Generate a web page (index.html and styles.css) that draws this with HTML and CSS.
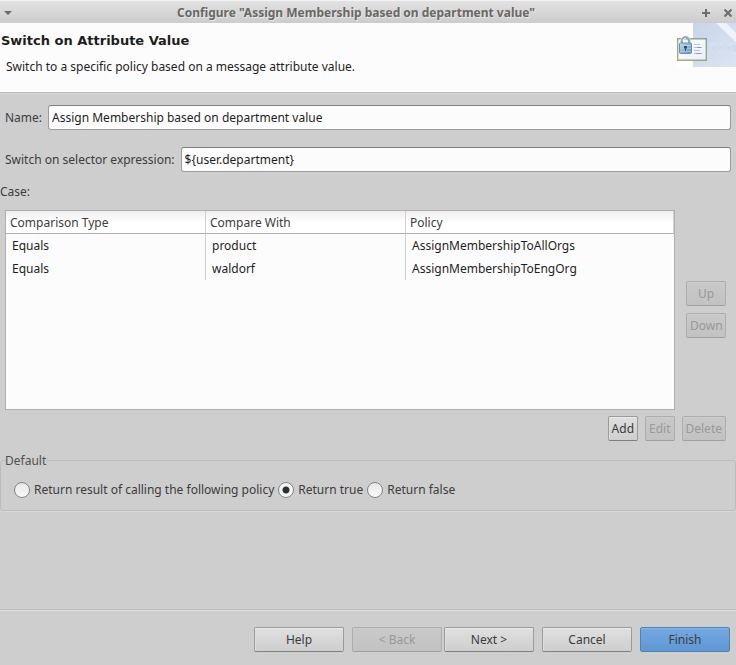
FILE: index.html
```html
<!DOCTYPE html>
<html lang="en">
<head>
<meta charset="utf-8">
<title>Configure "Assign Membership based on department value"</title>
<link rel="stylesheet" href="styles.css">
</head>
<body>
<div class="titlebar">
  <button class="win-btn" type="button" aria-label="Window menu"><svg width="8" height="4" viewBox="0 0 8 4"><path d="M0 0h8L4 4z" fill="#686868"/></svg></button>
  <div class="titlebar-text">Configure "Assign Membership based on department value"</div>
  <div class="win-actions">
    <button class="win-btn" type="button" aria-label="Maximize"><svg width="8" height="8" viewBox="0 0 8 8"><path d="M4 0v8M0 4h8" stroke="#6c6c6c" stroke-width="2"/></svg></button>
    <button class="win-btn" type="button" aria-label="Close"><svg width="8" height="8" viewBox="0 0 8 8"><path d="M.5.5l7 7M7.5.5l-7 7" stroke="#6c6c6c" stroke-width="2"/></svg></button>
  </div>
</div>
<header class="banner">
  <div class="banner-text">
    <h1>Switch on Attribute Value</h1>
    <p>Switch to a specific policy based on a message attribute value.</p>
  </div>
  <svg class="banner-art" width="59" height="44" viewBox="0 0 59 44" aria-hidden="true">
    <defs>
      <linearGradient id="sky" x1="0" y1="0" x2="1" y2="1"><stop offset="0" stop-color="#c8d5e8"/><stop offset="1" stop-color="#dbe4f3"/></linearGradient>
      <linearGradient id="card" x1="0" y1="0" x2="1" y2="1"><stop offset="0" stop-color="#ffffff"/><stop offset="1" stop-color="#e9effa"/></linearGradient>
      <linearGradient id="frame" x1="0" y1="1" x2="1" y2="0"><stop offset="0" stop-color="#b3a873"/><stop offset="1" stop-color="#86a39b"/></linearGradient>
      <linearGradient id="lock" x1="0" y1="0" x2="1" y2="1"><stop offset="0" stop-color="#c3dcee"/><stop offset="1" stop-color="#5f8fb9"/></linearGradient>
    </defs>
    <path d="M0 16h16v28H0z" fill="#fff"/>
    <path d="M16 0h43v44H16z" fill="url(#sky)"/>
    <path d="M39 0h10l10 10v9z" fill="#eef3fb"/>
    <path d="M31 21h28v8H31z" fill="#cfdbec"/>
    <g fill="none" stroke="#d9e3f1"><circle cx="36" cy="25" r="3"/><circle cx="44" cy="25" r="3"/><circle cx="52" cy="25" r="3"/><path d="M31 21h28M31 29h28"/></g>
    <path d="M.7 15.700h28.600v21.600H.7z" fill="url(#card)" stroke="url(#frame)" stroke-width="1.400"/>
    <path d="M17 21.500h6M17 24.500h8M17 27.500h6M17 30.500h8" stroke="#b3bfdd" fill="none"/>
    <path d="M20 24.500h4M19 30.500h5" stroke="#8b98c4" fill="none"/>
    <path d="M3.500 20v-2a5 5 0 0 1 10 0v2" fill="none" stroke="#e2e4a4" stroke-width="1"/>
    <path d="M5 21v-3a3.500 3.700 0 0 1 7 0v3" fill="none" stroke="#87abc2" stroke-width="2"/>
    <path d="M6 17.500a2.500 2.500 0 0 1 3-2" fill="none" stroke="#e4f1f9"/>
    <rect x="2.500" y="20" width="12" height="10.500" rx="1" fill="url(#lock)" stroke="#6790b4"/>
    <path d="M3 22.500h11M3 25.500h11M3 28.500h11" stroke="#b4d0e4" opacity=".7"/>
    <path d="M7 23h3v2.500H9V28H8v-2.500H7z" fill="#35506e"/>
  </svg>
</header>
<form class="page" onsubmit="return false">
  <main class="content">
    <div class="field"><label for="name">Name:</label><input id="name" type="text" value="Assign Membership based on department value"></div>
    <div class="field"><label for="expr">Switch on selector expression:</label><input id="expr" type="text" value="${user.department}"></div>
    <div class="case-label" id="case-label">Case:</div>
    <div class="case">
      <div class="table-box">
        <table aria-labelledby="case-label">
          <thead><tr><th>Comparison Type</th><th>Compare With</th><th class="wide">Policy</th></tr></thead>
          <tbody>
            <tr><td>Equals</td><td>product</td><td>AssignMembershipToAllOrgs</td></tr>
            <tr><td>Equals</td><td>waldorf</td><td>AssignMembershipToEngOrg</td></tr>
          </tbody>
        </table>
      </div>
      <div class="order"><button class="btn small" type="button" disabled>Up</button><button class="btn small" type="button" disabled>Down</button></div>
    </div>
    <div class="edit-actions">
      <button class="btn small" type="button">Add</button><button class="btn small" type="button" disabled>Edit</button><button class="btn small" type="button" disabled>Delete</button>
    </div>
    <fieldset>
      <legend>Default</legend>
      <div class="choices">
        <label><input type="radio" name="default">Return result of calling the following policy</label>
        <label><input type="radio" name="default" checked>Return true</label>
        <label><input type="radio" name="default">Return false</label>
      </div>
    </fieldset>
  </main>
  <footer class="footer">
    <button class="btn" type="button">Help</button>
    <div class="pair"><button class="btn" type="button" disabled>&lt; Back</button><button class="btn" type="button">Next &gt;</button></div>
    <button class="btn" type="button">Cancel</button>
    <button class="btn primary" type="submit">Finish</button>
  </footer>
</form>
</body>
</html>
```
FILE: styles.css
```css
* { box-sizing: border-box; }

body {
  margin: 0;
  min-height: 100vh;
  display: flex;
  flex-direction: column;
  background: #cecece;
  color: #3c3c3c;
  font: 12px/17px "Noto Sans", sans-serif;
}

button, input { font: inherit; color: inherit; }

.titlebar {
  display: grid;
  grid-template-columns: 24px 1fr 48px;
  align-items: center;
  height: 23px;
  padding: 1px 4px 0;
  border-top: 1px solid #f4f4f4;
  background: linear-gradient(#e2e2e2, #cccccc);
}

.titlebar-text {
  color: #696865;
  font-weight: 700;
  text-align: center;
  text-shadow: 1px 1px 0 #e8e8e8;
}

.win-btn {
  display: flex;
  align-items: center;
  width: 8px;
  height: 16px;
  padding: 0;
  border: 0;
  background: none;
}

.win-actions { display: flex; justify-content: flex-end; gap: 14px; }

.banner {
  display: flex;
  justify-content: space-between;
  height: 70px;
  background: #fcfcfc;
  border-bottom: 1px solid #b7b7b7;
  color: #1e1e1e;
}

.banner h1 {
  margin: 9px 0 0 1px;
  font: 700 13px/18px "DejaVu Sans", sans-serif;
}

.banner p { margin: 8px 0 0 6px; }

.page { flex: 1; display: flex; flex-direction: column; }

.content {
  flex: 1;
  padding-top: 11px;
  border-top: 1px solid #dadada;
}

.field {
  display: flex;
  align-items: center;
  gap: 6px;
  margin: 0 5px 17px;
}

.field input {
  flex: 1;
  min-width: 0;
  height: 25px;
  padding: 0 3px;
  border: 1px solid #9c9c9c;
  border-top-color: #808080;
  border-radius: 3px;
  background: #fcfcfc;
  color: #1e1e1e;
}

.case-label { margin: -6px 0 10px; }

.case {
  display: flex;
  gap: 11px;
  padding: 0 10px 0 5px;
}

.table-box {
  flex: 1;
  height: 200px;
  border: 1px solid #b0b0b0;
  background: #fcfcfc;
}

table {
  width: 100%;
  table-layout: fixed;
  border-collapse: separate;
  border-spacing: 0;
}

th {
  width: 200px;
  height: 23px;
  padding: 0 4px;
  border-right: 1px solid #d0d0d0;
  border-bottom: 1px solid #b0b0b0;
  background: linear-gradient(#eeeeee, #ffffff 50%);
  font-weight: 400;
  text-align: left;
}

th.wide { width: auto; }

td {
  height: 23px;
  padding: 0 6px;
  border-right: 1px solid #d0d0d0;
  color: #1e1e1e;
}

td:last-child { border-right: 0; }

.order {
  display: flex;
  flex-direction: column;
  justify-content: center;
  gap: 7px;
  width: 40px;
  padding-bottom: 2px;
}

.btn {
  width: 90px;
  height: 25px;
  padding: 0;
  border: 1px solid #9b9b9b;
  border-bottom-color: #808080;
  border-radius: 2px;
  background: linear-gradient(#e0e0e0, #cecece);
  box-shadow: inset 0 1px #ececec, inset 1px 0 #dedede;
}

.btn.small { width: auto; padding: 0 3px; }

.btn:disabled {
  border-color: #adadad;
  border-bottom-color: #a0a0a0;
  background: linear-gradient(#c9c9c9, #c2c2c2);
  box-shadow: inset 0 1px #cecece;
  color: #999999;
}

.btn.primary {
  border-color: #5480af;
  background: linear-gradient(#74a8e1, #5f97d4);
  box-shadow: inset 0 1px #83b5ea;
}

.edit-actions {
  display: flex;
  justify-content: flex-end;
  gap: 7px;
  padding: 6px 10px 0;
}

fieldset {
  min-width: 0;
  margin: 11px 0 0;
  padding: 0 13px 12px;
  border: 1px solid #bdbdbd;
  border-radius: 3px;
  box-shadow: 0 1px #d8d8d8;
}

legend { margin-left: -9px; padding: 0; color: #505050; }

.choices { display: flex; gap: 4px; padding-top: 12px; }

.choices label { display: flex; align-items: center; gap: 4px; }

input[type="radio"] {
  appearance: none;
  width: 16px;
  height: 16px;
  margin: 0;
  border: 1px solid #858585;
  border-radius: 50%;
  background: linear-gradient(#e8e8e8, #f9f9f9);
}

input[type="radio"]:checked {
  background: radial-gradient(circle, #2c3234 3px, #f4f4f4 4px);
}

.footer {
  display: flex;
  justify-content: flex-end;
  gap: 8px;
  padding: 17px 6px 13px;
  border-top: 1px solid #bababa;
  box-shadow: inset 0 1px #dedede;
}

.pair { display: flex; gap: 2px; }
```
